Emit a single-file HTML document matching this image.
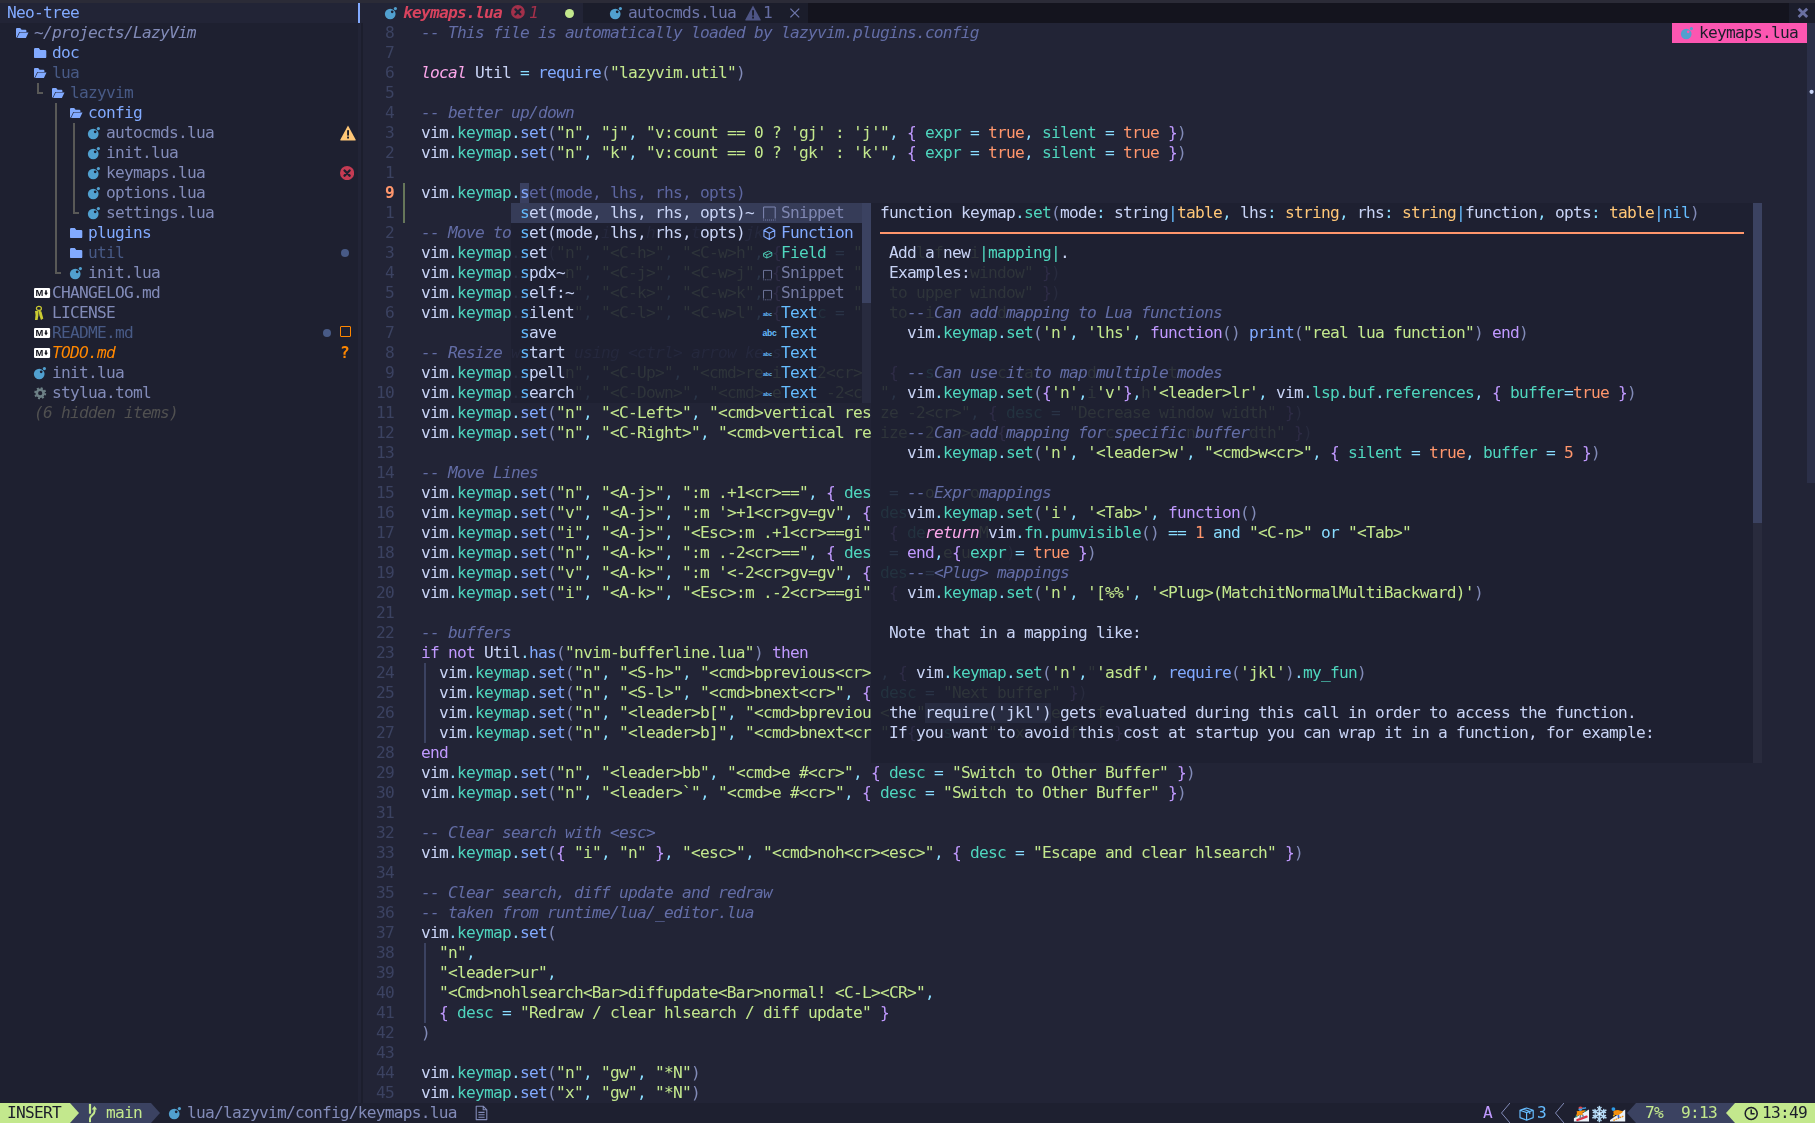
<!DOCTYPE html>
<html lang="en"><head><meta charset="utf-8"><title>keymaps.lua - nvim</title><style>
html,body{margin:0;padding:0}
body{width:1815px;height:1123px;overflow:hidden;background:#222436;position:relative;font-family:"DejaVu Sans Mono","Liberation Mono",monospace;font-size:16.2px;letter-spacing:-0.7532px;line-height:20px;color:#c8d3f5}
.r{position:absolute;display:block}
.row{position:absolute;left:0;width:1815px;height:20px;white-space:pre;will-change:transform}
.row span{position:absolute;top:0.3px;height:20px}
.i{font-style:italic} .b{font-weight:bold} .g{will-change:transform}
</style></head>
<body>
<div class="r" style="left:0px;top:0px;width:1815px;height:3px;background:#2b2b37;"></div>
<div class="r" style="left:0px;top:23px;width:358px;height:1080px;background:#1e2030;"></div>
<div class="r" style="left:361px;top:23px;width:2px;height:1080px;background:#1c1e2d;"></div>
<div class="r" style="left:0px;top:3px;width:358px;height:20px;background:#222436;"></div>
<div class="r" style="left:358px;top:3px;width:2.4px;height:20.4px;background:#82aaff;"></div>
<div class="r" style="left:583px;top:3px;width:225px;height:20px;background:#1b1d2b;"></div>
<div class="r" style="left:808px;top:3px;width:981px;height:20px;background:#14141e;"></div>
<div class="r" style="left:1789px;top:3px;width:26px;height:20px;background:#1b1d2b;"></div>
<div class="r" style="left:1807px;top:23px;width:8px;height:460px;background:#2b2f48;"></div>
<svg class="r" style="left:1807px;top:86px" width="8" height="12" viewBox="0 0 8 12"><circle cx="4.6" cy="5.8" r="2.1" fill="#c8d3f5"/></svg>
<svg class="r" style="left:384px;top:3px" width="16" height="20" viewBox="0 0 16 20"><circle cx="6.2" cy="11" r="5.35" fill="#51a0cf"/><circle cx="8.2" cy="8.8" r="1.35" fill="#222436"/><circle cx="11.4" cy="5.6" r="1.6" fill="#51a0cf"/></svg>
<svg class="r" style="left:511.1px;top:5.0px" width="13.8" height="13.8" viewBox="0 0 13.8 13.8"><circle cx="6.9" cy="6.9" r="6.9" fill="#a3304a"/><path d="M4.416,4.416L9.384,9.384M9.384,4.416L4.416,9.384" stroke="#222436" stroke-width="2.28" stroke-linecap="round"/></svg>
<div class="r" style="left:565.1px;top:9.0px;width:9.0px;height:9.0px;border-radius:50%;background:#c3e88d"></div>
<svg class="r" style="left:609px;top:3px" width="16" height="20" viewBox="0 0 16 20"><circle cx="6.2" cy="11" r="5.35" fill="#51a0cf"/><circle cx="8.2" cy="8.8" r="1.35" fill="#1b1d2b"/><circle cx="11.4" cy="5.6" r="1.6" fill="#51a0cf"/></svg>
<svg class="r" style="left:745px;top:5.2px" width="16" height="16" viewBox="0 0 16 16"><path d="M8,0.6 L15.6,14.4 a0.8,0.8 0 0 1 -0.7,1.1 H1.1 a0.8,0.8 0 0 1 -0.7,-1.1 Z" fill="#4e5585"/><rect x="7.1" y="5.2" width="1.9" height="5.4" fill="#1b1d2b"/><rect x="7.1" y="11.6" width="1.9" height="1.9" fill="#1b1d2b"/></svg>
<svg class="r" style="left:789px;top:3px" width="12" height="20" viewBox="0 0 12 20"><path d="M1.4,5.6l8.8,8.8M10.2,5.6l-8.8,8.8" stroke="#6e76aa" stroke-width="1.3" fill="none"/></svg>
<svg class="r" style="left:1796px;top:3px" width="14" height="20" viewBox="0 0 14 20"><path d="M2.6,5.8l8.6,8.2M11.2,5.8l-8.6,8.2" stroke="#6a70a2" stroke-width="2.9" fill="none"/></svg>
<div class="r" style="left:1672px;top:23px;width:135px;height:20px;background:#fc56b1;"></div>
<svg class="r" style="left:1680px;top:23px" width="16" height="20" viewBox="0 0 16 20"><circle cx="6.2" cy="11" r="5.35" fill="#51a0cf"/><circle cx="8.2" cy="8.8" r="1.35" fill="#fc56b1"/><circle cx="11.4" cy="5.6" r="1.6" fill="#51a0cf"/></svg>
<svg class="r" style="left:16px;top:23px" width="14" height="20" viewBox="0 0 14 20"><path d="M0,14.6 V6.1 a1,1 0 0 1 1,-1 h3.2 l1.4,1.6 h3.8 a1,1 0 0 1 1,1 v1.4 H3.3 L0.7,14.4z M3.8,9.5 H12.5 L9.9,15 H1.1 z" fill="#82aaff"/></svg>
<svg class="r" style="left:34px;top:43px" width="14" height="20" viewBox="0 0 14 20"><path d="M0,6.2 a1.2,1.2 0 0 1 1.2,-1.2 h3.6 l1.5,1.9 h4.8 a1.2,1.2 0 0 1 1.2,1.2 v5.8 a1.2,1.2 0 0 1 -1.2,1.2 h-9.9 a1.2,1.2 0 0 1 -1.2,-1.2 z" fill="#82aaff"/></svg>
<svg class="r" style="left:34px;top:63px" width="14" height="20" viewBox="0 0 14 20"><path d="M0,14.6 V6.1 a1,1 0 0 1 1,-1 h3.2 l1.4,1.6 h3.8 a1,1 0 0 1 1,1 v1.4 H3.3 L0.7,14.4z M3.8,9.5 H12.5 L9.9,15 H1.1 z" fill="#82aaff"/></svg>
<div class="r" style="left:37px;top:83px;width:2px;height:11px;background:#595957;"></div>
<div class="r" style="left:37px;top:92px;width:6px;height:2px;background:#595957;"></div>
<svg class="r" style="left:52px;top:83px" width="14" height="20" viewBox="0 0 14 20"><path d="M0,14.6 V6.1 a1,1 0 0 1 1,-1 h3.2 l1.4,1.6 h3.8 a1,1 0 0 1 1,1 v1.4 H3.3 L0.7,14.4z M3.8,9.5 H12.5 L9.9,15 H1.1 z" fill="#82aaff"/></svg>
<div class="r" style="left:55px;top:103px;width:2px;height:20px;background:#595957;"></div>
<svg class="r" style="left:70px;top:103px" width="14" height="20" viewBox="0 0 14 20"><path d="M0,14.6 V6.1 a1,1 0 0 1 1,-1 h3.2 l1.4,1.6 h3.8 a1,1 0 0 1 1,1 v1.4 H3.3 L0.7,14.4z M3.8,9.5 H12.5 L9.9,15 H1.1 z" fill="#82aaff"/></svg>
<div class="r" style="left:55px;top:123px;width:2px;height:20px;background:#595957;"></div>
<div class="r" style="left:73px;top:123px;width:2px;height:20px;background:#595957;"></div>
<svg class="r" style="left:87px;top:123px" width="16" height="20" viewBox="0 0 16 20"><circle cx="6.2" cy="11" r="5.35" fill="#51a0cf"/><circle cx="8.2" cy="8.8" r="1.35" fill="#1e2030"/><circle cx="11.4" cy="5.6" r="1.6" fill="#51a0cf"/></svg>
<div class="r" style="left:55px;top:143px;width:2px;height:20px;background:#595957;"></div>
<div class="r" style="left:73px;top:143px;width:2px;height:20px;background:#595957;"></div>
<svg class="r" style="left:87px;top:143px" width="16" height="20" viewBox="0 0 16 20"><circle cx="6.2" cy="11" r="5.35" fill="#51a0cf"/><circle cx="8.2" cy="8.8" r="1.35" fill="#1e2030"/><circle cx="11.4" cy="5.6" r="1.6" fill="#51a0cf"/></svg>
<div class="r" style="left:55px;top:163px;width:2px;height:20px;background:#595957;"></div>
<div class="r" style="left:73px;top:163px;width:2px;height:20px;background:#595957;"></div>
<svg class="r" style="left:87px;top:163px" width="16" height="20" viewBox="0 0 16 20"><circle cx="6.2" cy="11" r="5.35" fill="#51a0cf"/><circle cx="8.2" cy="8.8" r="1.35" fill="#1e2030"/><circle cx="11.4" cy="5.6" r="1.6" fill="#51a0cf"/></svg>
<div class="r" style="left:55px;top:183px;width:2px;height:20px;background:#595957;"></div>
<div class="r" style="left:73px;top:183px;width:2px;height:20px;background:#595957;"></div>
<svg class="r" style="left:87px;top:183px" width="16" height="20" viewBox="0 0 16 20"><circle cx="6.2" cy="11" r="5.35" fill="#51a0cf"/><circle cx="8.2" cy="8.8" r="1.35" fill="#1e2030"/><circle cx="11.4" cy="5.6" r="1.6" fill="#51a0cf"/></svg>
<div class="r" style="left:55px;top:203px;width:2px;height:20px;background:#595957;"></div>
<div class="r" style="left:73px;top:203px;width:2px;height:11px;background:#595957;"></div>
<div class="r" style="left:73px;top:212px;width:6px;height:2px;background:#595957;"></div>
<svg class="r" style="left:87px;top:203px" width="16" height="20" viewBox="0 0 16 20"><circle cx="6.2" cy="11" r="5.35" fill="#51a0cf"/><circle cx="8.2" cy="8.8" r="1.35" fill="#1e2030"/><circle cx="11.4" cy="5.6" r="1.6" fill="#51a0cf"/></svg>
<div class="r" style="left:55px;top:223px;width:2px;height:20px;background:#595957;"></div>
<div class="r" style="left:55px;top:243px;width:2px;height:20px;background:#595957;"></div>
<svg class="r" style="left:70px;top:223px" width="14" height="20" viewBox="0 0 14 20"><path d="M0,6.2 a1.2,1.2 0 0 1 1.2,-1.2 h3.6 l1.5,1.9 h4.8 a1.2,1.2 0 0 1 1.2,1.2 v5.8 a1.2,1.2 0 0 1 -1.2,1.2 h-9.9 a1.2,1.2 0 0 1 -1.2,-1.2 z" fill="#82aaff"/></svg>
<svg class="r" style="left:70px;top:243px" width="14" height="20" viewBox="0 0 14 20"><path d="M0,6.2 a1.2,1.2 0 0 1 1.2,-1.2 h3.6 l1.5,1.9 h4.8 a1.2,1.2 0 0 1 1.2,1.2 v5.8 a1.2,1.2 0 0 1 -1.2,1.2 h-9.9 a1.2,1.2 0 0 1 -1.2,-1.2 z" fill="#82aaff"/></svg>
<div class="r" style="left:55px;top:263px;width:2px;height:11px;background:#595957;"></div>
<div class="r" style="left:55px;top:272px;width:6px;height:2px;background:#595957;"></div>
<svg class="r" style="left:69px;top:263px" width="16" height="20" viewBox="0 0 16 20"><circle cx="6.2" cy="11" r="5.35" fill="#51a0cf"/><circle cx="8.2" cy="8.8" r="1.35" fill="#1e2030"/><circle cx="11.4" cy="5.6" r="1.6" fill="#51a0cf"/></svg>
<svg class="r g" style="left:34px;top:283px" width="18" height="20" viewBox="0 0 18 20"><rect x="0" y="5" width="16.1" height="10" rx="1.3" fill="#ffffff"/><text x="1.6" y="12.9" font-family="Liberation Sans, DejaVu Sans, sans-serif" font-weight="bold" font-size="8.2" textLength="7" lengthAdjust="spacingAndGlyphs" fill="#11121c">M</text><path d="M12,7.2v3.6" stroke="#11121c" stroke-width="1.6" fill="none"/><path d="M10.2,9.7h3.7l-1.85,2.9z" fill="#11121c"/></svg>
<svg class="r" style="left:34px;top:303px" width="12" height="20" viewBox="0 0 12 20"><ellipse cx="4.9" cy="5.4" rx="2.5" ry="2" fill="none" stroke="#cbcb32" stroke-width="1.2"/><path d="M1,8 L4.6,7.4 L4.3,13 L3.6,17 L1,17 L1.5,12 Z" fill="#cbcb32"/><path d="M4.6,7.6 L7.4,8.4 L9.3,15.6 L7,17 L5.4,12.6 Z" fill="#cbcb32"/></svg>
<svg class="r g" style="left:34px;top:323px" width="18" height="20" viewBox="0 0 18 20"><rect x="0" y="5" width="16.1" height="10" rx="1.3" fill="#ffffff"/><text x="1.6" y="12.9" font-family="Liberation Sans, DejaVu Sans, sans-serif" font-weight="bold" font-size="8.2" textLength="7" lengthAdjust="spacingAndGlyphs" fill="#11121c">M</text><path d="M12,7.2v3.6" stroke="#11121c" stroke-width="1.6" fill="none"/><path d="M10.2,9.7h3.7l-1.85,2.9z" fill="#11121c"/></svg>
<svg class="r g" style="left:34px;top:343px" width="18" height="20" viewBox="0 0 18 20"><rect x="0" y="5" width="16.1" height="10" rx="1.3" fill="#ffffff"/><text x="1.6" y="12.9" font-family="Liberation Sans, DejaVu Sans, sans-serif" font-weight="bold" font-size="8.2" textLength="7" lengthAdjust="spacingAndGlyphs" fill="#11121c">M</text><path d="M12,7.2v3.6" stroke="#11121c" stroke-width="1.6" fill="none"/><path d="M10.2,9.7h3.7l-1.85,2.9z" fill="#11121c"/></svg>
<svg class="r" style="left:33px;top:363px" width="16" height="20" viewBox="0 0 16 20"><circle cx="6.2" cy="11" r="5.35" fill="#51a0cf"/><circle cx="8.2" cy="8.8" r="1.35" fill="#1e2030"/><circle cx="11.4" cy="5.6" r="1.6" fill="#51a0cf"/></svg>
<svg class="r" style="left:34px;top:383px" width="14" height="20" viewBox="0 0 14 20"><circle cx="6.2" cy="10.2" r="3.4" fill="none" stroke="#6d8086" stroke-width="2.6"/><circle cx="6.2" cy="10.2" r="5.1" fill="none" stroke="#6d8086" stroke-width="1.8" stroke-dasharray="2 2"/></svg>
<svg class="r" style="left:340px;top:125px" width="16" height="16" viewBox="0 0 16 16"><path d="M8,0.6 L15.6,14.4 a0.8,0.8 0 0 1 -0.7,1.1 H1.1 a0.8,0.8 0 0 1 -0.7,-1.1 Z" fill="#ffc777"/><rect x="7.1" y="5.2" width="1.9" height="5.4" fill="#1b1d2b"/><rect x="7.1" y="11.6" width="1.9" height="1.9" fill="#1b1d2b"/></svg>
<svg class="r" style="left:339.9px;top:166.0px" width="14.2" height="14.2" viewBox="0 0 14.2 14.2"><circle cx="7.1" cy="7.1" r="7.1" fill="#c53b53"/><path d="M4.5440000000000005,4.5440000000000005L9.655999999999999,9.655999999999999M9.655999999999999,4.5440000000000005L4.5440000000000005,9.655999999999999" stroke="#1e2030" stroke-width="2.34" stroke-linecap="round"/></svg>
<div class="r" style="left:340.8px;top:248.8px;width:8.4px;height:8.4px;border-radius:50%;background:#485a86"></div>
<div class="r" style="left:323.0px;top:328.8px;width:8.4px;height:8.4px;border-radius:50%;background:#485a86"></div>
<div class="r" style="left:340px;top:326px;width:9.4px;height:9.4px;border:1.5px solid #ff8700;border-radius:1px"></div>
<div class="r" style="left:424px;top:663px;width:2px;height:80px;background:#3b4261;"></div>
<div class="r" style="left:424px;top:943px;width:2px;height:80px;background:#3b4261;"></div>
<div class="r" style="left:403px;top:183px;width:2px;height:40px;background:#66765a;"></div>
<div class="r" style="left:520px;top:183px;width:9px;height:20px;background:#3a4060;"></div>
<div class="r" style="left:511px;top:203px;width:360px;height:200px;background:#1e2031;"></div>
<div class="r" style="left:511px;top:203px;width:351px;height:20px;background:#363c58;"></div>
<div class="r" style="left:862px;top:203px;width:9px;height:200px;background:#282b3f;"></div>
<div class="r" style="left:862px;top:203px;width:9px;height:100px;background:#3b4261;"></div>
<div class="r" style="left:871px;top:203px;width:891px;height:560px;background:#1e2031;"></div>
<div class="r" style="left:1753px;top:203px;width:9px;height:560px;background:#292b3d;"></div>
<div class="r" style="left:1753px;top:203px;width:9px;height:320px;background:#3b4261;"></div>
<div class="r" style="left:880px;top:232px;width:864px;height:2px;background:#ff966c;"></div>
<div class="r" style="left:925px;top:703px;width:126px;height:20px;background:#272b40;"></div>
<svg class="r" style="left:763px;top:203px" width="14" height="20" viewBox="0 0 14 20"><path d="M0.6,15.6V4h11.6v11.6" fill="none" stroke="#7f87b2" stroke-width="1"/><path d="M0.1,17h12.6" stroke="#7f87b2" stroke-width="0.9" stroke-dasharray="1 1"/></svg>
<svg class="r" style="left:763px;top:223px" width="14" height="20" viewBox="0 0 14 20"><path d="M6.3,4.2l5.4,3v6.4l-5.4,3l-5.4,-3v-6.4z M0.9,7.2l5.4,3l5.4,-3 M6.3,10.2v6.4" fill="none" stroke="#82aaff" stroke-width="1.1" stroke-linejoin="round"/></svg>
<svg class="r" style="left:763px;top:243px" width="10" height="20" viewBox="0 0 10 20"><path d="M5.4,8.2l3.4,1.4v3.2l-5,2.2l-3.2,-1.6v-3z M0.6,10.4l3.2,1.5l5,-2.3 M3.8,11.9v3.1" fill="none" stroke="#4fd6be" stroke-width="0.9" stroke-linejoin="round"/></svg>
<svg class="r" style="left:763px;top:263px" width="10" height="20" viewBox="0 0 10 20"><path d="M0.5,15.6V7.4h8v8.2" fill="none" stroke="#737aa2" stroke-width="0.9"/><path d="M0.1,16.8h9" stroke="#737aa2" stroke-width="0.8" stroke-dasharray="1 0.8"/></svg>
<svg class="r" style="left:763px;top:283px" width="10" height="20" viewBox="0 0 10 20"><path d="M0.5,15.6V7.4h8v8.2" fill="none" stroke="#737aa2" stroke-width="0.9"/><path d="M0.1,16.8h9" stroke="#737aa2" stroke-width="0.8" stroke-dasharray="1 0.8"/></svg>
<span class="r" style="left:763px;top:309.5px;font:bold 5.4px/8px 'Liberation Sans','DejaVu Sans',sans-serif;color:#65bcff;letter-spacing:-0.2px">abc</span>
<span class="r" style="left:762.5px;top:327.5px;font:bold 8.6px/10px 'Liberation Sans','DejaVu Sans',sans-serif;color:#65bcff;letter-spacing:-0.3px">abc</span>
<span class="r" style="left:763px;top:349.5px;font:bold 5.4px/8px 'Liberation Sans','DejaVu Sans',sans-serif;color:#65bcff;letter-spacing:-0.2px">abc</span>
<span class="r" style="left:763px;top:369.5px;font:bold 5.4px/8px 'Liberation Sans','DejaVu Sans',sans-serif;color:#65bcff;letter-spacing:-0.2px">abc</span>
<span class="r" style="left:763px;top:389.5px;font:bold 5.4px/8px 'Liberation Sans','DejaVu Sans',sans-serif;color:#65bcff;letter-spacing:-0.2px">abc</span>
<div class="r" style="left:0px;top:1103px;width:1815px;height:20px;background:#1e2030;"></div>
<div class="r" style="left:0px;top:1103px;width:70px;height:20px;background:#c3e88d;"></div>
<div class="r" style="left:70px;top:1103px;width:81px;height:20px;background:#3b4261;"></div>
<svg class="r" style="left:70px;top:1103px" width="9" height="20" viewBox="0 0 9 20"><path d="M0,0L9,10L0,20z" fill="#c3e88d"/></svg>
<svg class="r" style="left:151px;top:1103px" width="9" height="20" viewBox="0 0 9 20"><path d="M0,0L9,10L0,20z" fill="#3b4261"/></svg>
<svg class="r" style="left:88px;top:1103px" width="10" height="20" viewBox="0 0 10 20"><path d="M2,0.9v9.8" stroke="#c3e88d" stroke-width="2.2" fill="none"/><path d="M2,19.2v-3.6c0,-3.6 4.5,-3.4 4.5,-7v-3" stroke="#c3e88d" stroke-width="2" fill="none"/><path d="M3.7,6.4L6.5,3L9.1,6.4z" fill="#c3e88d"/></svg>
<svg class="r" style="left:168px;top:1103px" width="16" height="20" viewBox="0 0 16 20"><circle cx="6.2" cy="11" r="5.35" fill="#51a0cf"/><circle cx="8.2" cy="8.8" r="1.35" fill="#1e2030"/><circle cx="11.4" cy="5.6" r="1.6" fill="#51a0cf"/></svg>
<svg class="r" style="left:475px;top:1103px" width="14" height="20" viewBox="0 0 14 20"><path d="M1.2,3.2h7l3.6,3.6v9.8h-10.6z M8.2,3.2v3.6h3.6 M3.4,9.4h6.2 M3.4,11.8h6.2 M3.4,14.2h6.2" fill="none" stroke="#828bb8" stroke-width="1.1" stroke-linejoin="round"/></svg>
<svg class="r" style="left:1501px;top:1103px" width="9" height="20" viewBox="0 0 9 20"><path d="M9,0L0.5,10L9,20" fill="none" stroke="#828bb8" stroke-width="1"/></svg>
<svg class="r" style="left:1555px;top:1103px" width="9" height="20" viewBox="0 0 9 20"><path d="M9,0L0.5,10L9,20" fill="none" stroke="#828bb8" stroke-width="1"/></svg>
<svg class="r" style="left:1519px;top:1103px" width="16" height="20" viewBox="0 0 16 20"><path d="M1,7.2l6.6,-2.2l6.6,2.2v7.4l-6.6,2.6l-6.6,-2.6z M1,7.2l6.6,2.4l6.6,-2.4 M7.6,9.6v7.6 M4.2,6.1l6.6,2.4v2.6" fill="none" stroke="#65bcff" stroke-width="1.2" stroke-linejoin="round"/></svg>
<div class="r" style="left:1636px;top:1103px;width:99px;height:20px;background:#3b4261;"></div>
<svg class="r" style="left:1627px;top:1103px" width="9" height="20" viewBox="0 0 9 20"><path d="M9,0L0,10L9,20z" fill="#3b4261"/></svg>
<div class="r" style="left:1735px;top:1103px;width:80px;height:20px;background:#c3e88d;"></div>
<svg class="r" style="left:1726px;top:1103px" width="9" height="20" viewBox="0 0 9 20"><path d="M9,0L0,10L9,20z" fill="#c3e88d"/></svg>
<svg class="r" style="left:1744px;top:1103px" width="16" height="20" viewBox="0 0 16 20"><circle cx="7.2" cy="10.4" r="6" fill="none" stroke="#1b1d2b" stroke-width="1.5"/><path d="M7.2,6.6v4.2h3.4" fill="none" stroke="#1b1d2b" stroke-width="1.5"/></svg>
<svg class="r" style="left:1573px;top:1103px" width="17" height="20" viewBox="0 0 17 20"><path d="M0.9,15.3L16,6.5V18.6H0.9z" fill="#eaf1f8"/><path d="M4.4,17L13.6,13.6" stroke="#dd2e44" stroke-width="2.3" stroke-linecap="round"/><path d="M7.6,11.4L7.1,15.6M9.4,11.4L10.6,14.6" stroke="#77838f" stroke-width="1.5"/><path d="M3.6,8.2L11.6,7.2L12.6,8.2L9.6,9.6V12H5.6L4.4,13.6L3,13L4,10z" fill="#f4900c"/><circle cx="3.4" cy="13.4" r="0.9" fill="#1fa68a"/><circle cx="12.6" cy="8" r="0.8" fill="#1fa68a"/><path d="M8.6,5.6C10.4,5.2 11.6,5.4 13,4.6" stroke="#3b9fe6" stroke-width="1.5" fill="none"/><circle cx="7.3" cy="6.3" r="1.7" fill="#4aa6e8"/><path d="M5.3,5.6a2.2,2.2 0 0 1 4.4,0z" fill="#e2474a"/></svg>
<svg class="r" style="left:1592px;top:1103px" width="16" height="22" viewBox="0 0 16 22"><g stroke="#b5daf6" fill="none" stroke-linecap="round"><path d="M7.4,3.6v14.8M1,7.3l12.8,7.4M13.8,7.3l-12.8,7.4" stroke-width="1.7"/><path d="M7.4,6.2l4.2,2.4v4.8l-4.2,2.4l-4.2,-2.4v-4.8z" stroke-width="1.3"/><path d="M5.6,4.4l1.8,1.7l1.8,-1.7M5.6,17.6l1.8,-1.7l1.8,1.7M1.2,9.6l2.4,-0.7l-0.6,-2.4M13.6,9.6l-2.4,-0.7l0.6,-2.4M1.2,12.4l2.4,0.7l-0.6,2.4M13.6,12.4l-2.4,0.7l0.6,2.4" stroke-width="1.3"/></g><circle cx="7.4" cy="11" r="0.9" fill="#e8f4fd"/></svg>
<svg class="r" style="left:1610px;top:1103px" width="17" height="20" viewBox="0 0 17 20"><path d="M0,17L15.2,6.5V18.6H0z" fill="#eaf1f8"/><path d="M3.4,17.4L13.8,13" stroke="#f4900c" stroke-width="1.3" stroke-dasharray="1.6 0.7"/><path d="M8.2,11.4L8.8,15" stroke="#3a67c8" stroke-width="1.7"/><path d="M3.6,7.6L8,7L12.8,8.2L12.4,9.4L8.6,12H4.4L3.4,10z" fill="#f4900c"/><circle cx="3.9" cy="12.5" r="1" fill="#f4b40c"/><circle cx="3.4" cy="6.1" r="1.9" fill="#2e9be6"/></svg>
<div class="row" style="top:3px"><span style="left:7px;color:#82aaff">Neo-tree</span><span class="i b" style="left:403px;color:#d8435e">keymaps.lua</span><span class="i " style="left:529px;color:#a3304a">1</span><span style="left:628px;color:#6e76aa">autocmds.lua</span><span style="left:763px;color:#656da2">1</span></div>
<div class="row" style="top:23px"><span style="left:1699px;color:#1b1d2b">keymaps.lua</span><span class="i " style="left:34px;color:#828bb8">~/projects/LazyVim</span><span style="left:385px;color:#3b4261">8</span><span class="i " style="left:421px;color:#636da6">--</span><span class="i " style="left:448px;color:#636da6">This</span><span class="i " style="left:493px;color:#636da6">file</span><span class="i " style="left:538px;color:#636da6">is</span><span class="i " style="left:565px;color:#636da6">automatically</span><span class="i " style="left:691px;color:#636da6">loaded</span><span class="i " style="left:754px;color:#636da6">by</span><span class="i " style="left:781px;color:#636da6">lazyvim.plugins.config</span></div>
<div class="row" style="top:43px"><span style="left:52px;color:#82aaff">doc</span><span style="left:385px;color:#3b4261">7</span></div>
<div class="row" style="top:63px"><span style="left:52px;color:#485a86">lua</span><span style="left:385px;color:#3b4261">6</span><span class="i " style="left:421px;color:#fca7ea">local</span><span style="left:475px;color:#c8d3f5">Util</span><span style="left:520px;color:#89ddff">=</span><span style="left:538px;color:#82aaff">require</span><span style="left:601px;color:#828bb8">(</span><span style="left:610px;color:#c3e88d">"lazyvim.util"</span><span style="left:736px;color:#828bb8">)</span></div>
<div class="row" style="top:83px"><span style="left:70px;color:#485a86">lazyvim</span><span style="left:385px;color:#3b4261">5</span></div>
<div class="row" style="top:103px"><span style="left:88px;color:#82aaff">config</span><span style="left:385px;color:#3b4261">4</span><span class="i " style="left:421px;color:#636da6">--</span><span class="i " style="left:448px;color:#636da6">better</span><span class="i " style="left:511px;color:#636da6">up/down</span></div>
<div class="row" style="top:123px"><span style="left:106px;color:#828bb8">autocmds.lua</span><span style="left:385px;color:#3b4261">3</span><span style="left:421px;color:#c8d3f5">vim</span><span style="left:448px;color:#89ddff">.</span><span style="left:457px;color:#4fd6be">keymap</span><span style="left:511px;color:#89ddff">.</span><span style="left:520px;color:#82aaff">set</span><span style="left:547px;color:#828bb8">(</span><span style="left:556px;color:#c3e88d">"n"</span><span style="left:583px;color:#89ddff">,</span><span style="left:601px;color:#c3e88d">"j"</span><span style="left:628px;color:#89ddff">,</span><span style="left:646px;color:#c3e88d">"v:count</span><span style="left:727px;color:#c3e88d">==</span><span style="left:754px;color:#c3e88d">0</span><span style="left:772px;color:#c3e88d">?</span><span style="left:790px;color:#c3e88d">'gj'</span><span style="left:835px;color:#c3e88d">:</span><span style="left:853px;color:#c3e88d">'j'"</span><span style="left:889px;color:#89ddff">,</span><span style="left:907px;color:#c099ff">{</span><span style="left:925px;color:#4fd6be">expr</span><span style="left:970px;color:#89ddff">=</span><span style="left:988px;color:#ff966c">true</span><span style="left:1024px;color:#89ddff">,</span><span style="left:1042px;color:#4fd6be">silent</span><span style="left:1105px;color:#89ddff">=</span><span style="left:1123px;color:#ff966c">true</span><span style="left:1168px;color:#c099ff">}</span><span style="left:1177px;color:#828bb8">)</span></div>
<div class="row" style="top:143px"><span style="left:106px;color:#828bb8">init.lua</span><span style="left:385px;color:#3b4261">2</span><span style="left:421px;color:#c8d3f5">vim</span><span style="left:448px;color:#89ddff">.</span><span style="left:457px;color:#4fd6be">keymap</span><span style="left:511px;color:#89ddff">.</span><span style="left:520px;color:#82aaff">set</span><span style="left:547px;color:#828bb8">(</span><span style="left:556px;color:#c3e88d">"n"</span><span style="left:583px;color:#89ddff">,</span><span style="left:601px;color:#c3e88d">"k"</span><span style="left:628px;color:#89ddff">,</span><span style="left:646px;color:#c3e88d">"v:count</span><span style="left:727px;color:#c3e88d">==</span><span style="left:754px;color:#c3e88d">0</span><span style="left:772px;color:#c3e88d">?</span><span style="left:790px;color:#c3e88d">'gk'</span><span style="left:835px;color:#c3e88d">:</span><span style="left:853px;color:#c3e88d">'k'"</span><span style="left:889px;color:#89ddff">,</span><span style="left:907px;color:#c099ff">{</span><span style="left:925px;color:#4fd6be">expr</span><span style="left:970px;color:#89ddff">=</span><span style="left:988px;color:#ff966c">true</span><span style="left:1024px;color:#89ddff">,</span><span style="left:1042px;color:#4fd6be">silent</span><span style="left:1105px;color:#89ddff">=</span><span style="left:1123px;color:#ff966c">true</span><span style="left:1168px;color:#c099ff">}</span><span style="left:1177px;color:#828bb8">)</span></div>
<div class="row" style="top:163px"><span style="left:106px;color:#828bb8">keymaps.lua</span><span style="left:385px;color:#3b4261">1</span></div>
<div class="row" style="top:183px"><span style="left:106px;color:#828bb8">options.lua</span><span class="b" style="left:385px;color:#ff966c">9</span><span style="left:421px;color:#c8d3f5">vim</span><span style="left:448px;color:#89ddff">.</span><span style="left:457px;color:#4fd6be">keymap</span><span style="left:511px;color:#89ddff">.</span><span style="left:520px;color:#82aaff">s</span><span style="left:529px;color:#5d66a0">et(mode,</span><span style="left:610px;color:#5d66a0">lhs,</span><span style="left:655px;color:#5d66a0">rhs,</span><span style="left:700px;color:#5d66a0">opts)</span></div>
<div class="row" style="top:203px"><span style="left:106px;color:#828bb8">settings.lua</span><span style="left:385px;color:#3b4261">1</span><span style="left:520px;color:#65bcff">s</span><span style="left:529px;color:#c8d3f5">et(mode,</span><span style="left:610px;color:#c8d3f5">lhs,</span><span style="left:655px;color:#c8d3f5">rhs,</span><span style="left:700px;color:#c8d3f5">opts)~</span><span style="left:781px;color:#7f87b2">Snippet</span><span style="left:880px;color:#c8d3f5">function</span><span style="left:961px;color:#c8d3f5">keymap</span><span style="left:1015px;color:#89ddff">.</span><span style="left:1024px;color:#4fd6be">set</span><span style="left:1051px;color:#828bb8">(</span><span style="left:1060px;color:#c8d3f5">mode</span><span style="left:1096px;color:#89ddff">:</span><span style="left:1114px;color:#c8d3f5">string</span><span style="left:1168px;color:#65bcff">|</span><span style="left:1177px;color:#ffc777">table</span><span style="left:1222px;color:#89ddff">,</span><span style="left:1240px;color:#c8d3f5">lhs</span><span style="left:1267px;color:#89ddff">:</span><span style="left:1285px;color:#ffc777">string</span><span style="left:1339px;color:#89ddff">,</span><span style="left:1357px;color:#c8d3f5">rhs</span><span style="left:1384px;color:#89ddff">:</span><span style="left:1402px;color:#ffc777">string</span><span style="left:1456px;color:#65bcff">|</span><span style="left:1465px;color:#c8d3f5">function</span><span style="left:1537px;color:#89ddff">,</span><span style="left:1555px;color:#c8d3f5">opts</span><span style="left:1591px;color:#89ddff">:</span><span style="left:1609px;color:#ffc777">table</span><span style="left:1654px;color:#65bcff">|nil</span><span style="left:1690px;color:#828bb8">)</span></div>
<div class="row" style="top:223px"><span style="left:88px;color:#82aaff">plugins</span><span style="left:385px;color:#3b4261">2</span><span class="i " style="left:421px;color:#636da6">--</span><span class="i " style="left:448px;color:#636da6">Move</span><span class="i " style="left:493px;color:#636da6">to</span><span class="i " style="left:601px;color:#25283d">i</span><span class="i " style="left:646px;color:#25283d">h</span><span class="i " style="left:691px;color:#25283d">t</span><span class="i " style="left:745px;color:#25283d">jk</span><span style="left:520px;color:#65bcff">s</span><span style="left:529px;color:#c8d3f5">et(mode,</span><span style="left:610px;color:#c8d3f5">lhs,</span><span style="left:655px;color:#c8d3f5">rhs,</span><span style="left:700px;color:#c8d3f5">opts)</span><span style="left:781px;color:#82aaff">Function</span></div>
<div class="row" style="top:243px"><span style="left:88px;color:#485a86">util</span><span style="left:385px;color:#3b4261">3</span><span style="left:421px;color:#c8d3f5">vim</span><span style="left:448px;color:#89ddff">.</span><span style="left:457px;color:#4fd6be">keymap</span><span style="left:511px;color:#293346">.</span><span style="left:547px;color:#282b3e">(</span><span style="left:556px;color:#2e343a">"n"</span><span style="left:583px;color:#293346">,</span><span style="left:601px;color:#2e343a">"&lt;C-h&gt;"</span><span style="left:664px;color:#293346">,</span><span style="left:682px;color:#2e343a">"&lt;C-w&gt;h"</span><span style="left:754px;color:#293346">,</span><span style="left:772px;color:#2e2c46">{</span><span style="left:835px;color:#293346">=</span><span style="left:853px;color:#2e343a">"</span><span style="left:916px;color:#2e343a">l</span><span style="left:934px;color:#2e343a">f</span><span style="left:970px;color:#2e343a">i</span><span style="left:520px;color:#65bcff">s</span><span style="left:529px;color:#c8d3f5">et</span><span style="left:781px;color:#4fd6be">Field</span><span style="left:889px;color:#c8d3f5">Add</span><span style="left:925px;color:#c8d3f5">a</span><span style="left:943px;color:#c8d3f5">new</span><span style="left:979px;color:#4fd6be">|mapping|</span><span style="left:1060px;color:#c8d3f5">.</span></div>
<div class="row" style="top:263px"><span style="left:88px;color:#828bb8">init.lua</span><span style="left:385px;color:#3b4261">4</span><span style="left:421px;color:#c8d3f5">vim</span><span style="left:448px;color:#89ddff">.</span><span style="left:457px;color:#4fd6be">keymap</span><span style="left:511px;color:#293346">.</span><span style="left:565px;color:#2e343a">n"</span><span style="left:583px;color:#293346">,</span><span style="left:601px;color:#2e343a">"&lt;C-j&gt;"</span><span style="left:664px;color:#293346">,</span><span style="left:682px;color:#2e343a">"&lt;C-w&gt;j"</span><span style="left:754px;color:#293346">,</span><span style="left:772px;color:#2e2c46">{</span><span style="left:853px;color:#2e343a">"</span><span style="left:970px;color:#2e343a">window"</span><span style="left:1042px;color:#2e2c46">}</span><span style="left:1051px;color:#282b3e">)</span><span style="left:520px;color:#65bcff">s</span><span style="left:529px;color:#c8d3f5">pdx~</span><span style="left:781px;color:#737aa2">Snippet</span><span style="left:889px;color:#c8d3f5">Examples:</span></div>
<div class="row" style="top:283px"><span style="left:52px;color:#828bb8">CHANGELOG.md</span><span style="left:385px;color:#3b4261">5</span><span style="left:421px;color:#c8d3f5">vim</span><span style="left:448px;color:#89ddff">.</span><span style="left:457px;color:#4fd6be">keymap</span><span style="left:511px;color:#293346">.</span><span style="left:574px;color:#2e343a">"</span><span style="left:583px;color:#293346">,</span><span style="left:601px;color:#2e343a">"&lt;C-k&gt;"</span><span style="left:664px;color:#293346">,</span><span style="left:682px;color:#2e343a">"&lt;C-w&gt;k"</span><span style="left:754px;color:#293346">,</span><span style="left:772px;color:#2e2c46">{</span><span style="left:853px;color:#2e343a">"</span><span style="left:889px;color:#2e343a">to</span><span style="left:916px;color:#2e343a">upper</span><span style="left:970px;color:#2e343a">window"</span><span style="left:1042px;color:#2e2c46">}</span><span style="left:1051px;color:#282b3e">)</span><span style="left:520px;color:#65bcff">s</span><span style="left:529px;color:#c8d3f5">elf:~</span><span style="left:781px;color:#737aa2">Snippet</span></div>
<div class="row" style="top:303px"><span style="left:52px;color:#828bb8">LICENSE</span><span style="left:385px;color:#3b4261">6</span><span style="left:421px;color:#c8d3f5">vim</span><span style="left:448px;color:#89ddff">.</span><span style="left:457px;color:#4fd6be">keymap</span><span style="left:511px;color:#293346">.</span><span style="left:574px;color:#2e343a">"</span><span style="left:583px;color:#293346">,</span><span style="left:601px;color:#2e343a">"&lt;C-l&gt;"</span><span style="left:664px;color:#293346">,</span><span style="left:682px;color:#2e343a">"&lt;C-w&gt;l"</span><span style="left:754px;color:#293346">,</span><span style="left:772px;color:#2e2c46">{</span><span style="left:817px;color:#23323f">c</span><span style="left:835px;color:#293346">=</span><span style="left:853px;color:#2e343a">"</span><span style="left:889px;color:#2e343a">to</span><span style="left:925px;color:#2e343a">i</span><span style="left:997px;color:#2e343a">d</span><span style="left:520px;color:#65bcff">s</span><span style="left:529px;color:#c8d3f5">ilent</span><span style="left:781px;color:#65bcff">Text</span><span class="i " style="left:907px;color:#636da6">--</span><span class="i " style="left:934px;color:#636da6">Can</span><span class="i " style="left:970px;color:#636da6">add</span><span class="i " style="left:1006px;color:#636da6">mapping</span><span class="i " style="left:1078px;color:#636da6">to</span><span class="i " style="left:1105px;color:#636da6">Lua</span><span class="i " style="left:1141px;color:#636da6">functions</span></div>
<div class="row" style="top:323px"><span style="left:52px;color:#485a86">README.md</span><span style="left:385px;color:#3b4261">7</span><span style="left:520px;color:#65bcff">s</span><span style="left:529px;color:#c8d3f5">ave</span><span style="left:781px;color:#65bcff">Text</span><span style="left:907px;color:#c8d3f5">vim</span><span style="left:934px;color:#89ddff">.</span><span style="left:943px;color:#4fd6be">keymap</span><span style="left:997px;color:#89ddff">.</span><span style="left:1006px;color:#4fd6be">set</span><span style="left:1033px;color:#828bb8">(</span><span style="left:1042px;color:#c3e88d">'n'</span><span style="left:1069px;color:#89ddff">,</span><span style="left:1087px;color:#c3e88d">'lhs'</span><span style="left:1132px;color:#89ddff">,</span><span style="left:1150px;color:#c099ff">function</span><span style="left:1222px;color:#828bb8">()</span><span style="left:1249px;color:#82aaff">print</span><span style="left:1294px;color:#828bb8">(</span><span style="left:1303px;color:#c3e88d">"real</span><span style="left:1357px;color:#c3e88d">lua</span><span style="left:1393px;color:#c3e88d">function"</span><span style="left:1474px;color:#828bb8">)</span><span style="left:1492px;color:#c099ff">end</span><span style="left:1519px;color:#828bb8">)</span></div>
<div class="row" style="top:343px"><span class="i " style="left:52px;color:#ff8700">TODO.md</span><span class="b" style="left:340px;color:#ff8700">?</span><span style="left:385px;color:#3b4261">8</span><span class="i " style="left:421px;color:#636da6">--</span><span class="i " style="left:448px;color:#636da6">Resize</span><span class="i " style="left:511px;color:#25283d">w</span><span class="i " style="left:574px;color:#25283d">using</span><span class="i " style="left:628px;color:#25283d">&lt;ctrl&gt;</span><span class="i " style="left:691px;color:#25283d">arrow</span><span class="i " style="left:745px;color:#25283d">ke</span><span class="i " style="left:772px;color:#25283d">s</span><span style="left:520px;color:#65bcff">s</span><span style="left:529px;color:#c8d3f5">tart</span><span style="left:781px;color:#65bcff">Text</span></div>
<div class="row" style="top:363px"><span style="left:52px;color:#828bb8">init.lua</span><span style="left:385px;color:#3b4261">9</span><span style="left:421px;color:#c8d3f5">vim</span><span style="left:448px;color:#89ddff">.</span><span style="left:457px;color:#4fd6be">keymap</span><span style="left:511px;color:#293346">.</span><span style="left:565px;color:#2e343a">n"</span><span style="left:583px;color:#293346">,</span><span style="left:601px;color:#2e343a">"&lt;C-Up&gt;"</span><span style="left:673px;color:#293346">,</span><span style="left:691px;color:#2e343a">"&lt;cmd&gt;re</span><span style="left:772px;color:#2e343a">i</span><span style="left:817px;color:#2e343a">2&lt;cr&gt;</span><span style="left:889px;color:#2e2c46">{</span><span style="left:925px;color:#23323f">s</span><span style="left:997px;color:#2e343a">c</span><span style="left:1024px;color:#2e343a">a</span><span style="left:1087px;color:#2e343a">d</span><span style="left:1168px;color:#2e343a">t</span><span style="left:520px;color:#65bcff">s</span><span style="left:529px;color:#c8d3f5">pell</span><span style="left:781px;color:#65bcff">Text</span><span class="i " style="left:907px;color:#636da6">--</span><span class="i " style="left:934px;color:#636da6">Can</span><span class="i " style="left:970px;color:#636da6">use</span><span class="i " style="left:1006px;color:#636da6">it</span><span class="i " style="left:1033px;color:#636da6">to</span><span class="i " style="left:1060px;color:#636da6">map</span><span class="i " style="left:1096px;color:#636da6">multiple</span><span class="i " style="left:1177px;color:#636da6">modes</span></div>
<div class="row" style="top:383px"><span style="left:52px;color:#828bb8">stylua.toml</span><span style="left:376px;color:#3b4261">10</span><span style="left:421px;color:#c8d3f5">vim</span><span style="left:448px;color:#89ddff">.</span><span style="left:457px;color:#4fd6be">keymap</span><span style="left:511px;color:#293346">.</span><span style="left:574px;color:#2e343a">"</span><span style="left:583px;color:#293346">,</span><span style="left:601px;color:#2e343a">"&lt;C-Down&gt;"</span><span style="left:691px;color:#293346">,</span><span style="left:709px;color:#2e343a">"&lt;cmd&gt;</span><span style="left:772px;color:#2e343a">e</span><span style="left:826px;color:#2e343a">-2&lt;c</span><span style="left:880px;color:#2e343a">"</span><span style="left:889px;color:#293346">,</span><span style="left:1087px;color:#2e343a">i</span><span style="left:1141px;color:#2e343a">h</span><span style="left:520px;color:#65bcff">s</span><span style="left:529px;color:#c8d3f5">earch</span><span style="left:781px;color:#65bcff">Text</span><span style="left:907px;color:#c8d3f5">vim</span><span style="left:934px;color:#89ddff">.</span><span style="left:943px;color:#4fd6be">keymap</span><span style="left:997px;color:#89ddff">.</span><span style="left:1006px;color:#4fd6be">set</span><span style="left:1033px;color:#828bb8">(</span><span style="left:1042px;color:#c099ff">{</span><span style="left:1051px;color:#c3e88d">'n'</span><span style="left:1078px;color:#89ddff">,</span><span style="left:1096px;color:#c3e88d">'v'</span><span style="left:1123px;color:#c099ff">}</span><span style="left:1132px;color:#89ddff">,</span><span style="left:1150px;color:#c3e88d">'&lt;leader&gt;lr'</span><span style="left:1258px;color:#89ddff">,</span><span style="left:1276px;color:#c8d3f5">vim</span><span style="left:1303px;color:#89ddff">.</span><span style="left:1312px;color:#4fd6be">lsp</span><span style="left:1339px;color:#89ddff">.</span><span style="left:1348px;color:#4fd6be">buf</span><span style="left:1375px;color:#89ddff">.</span><span style="left:1384px;color:#4fd6be">references</span><span style="left:1474px;color:#89ddff">,</span><span style="left:1492px;color:#c099ff">{</span><span style="left:1510px;color:#4fd6be">buffer</span><span style="left:1564px;color:#89ddff">=</span><span style="left:1573px;color:#ff966c">true</span><span style="left:1618px;color:#c099ff">}</span><span style="left:1627px;color:#828bb8">)</span></div>
<div class="row" style="top:403px"><span class="i " style="left:34px;color:#505050">(6 hidden items)</span><span style="left:376px;color:#3b4261">11</span><span style="left:421px;color:#c8d3f5">vim</span><span style="left:448px;color:#89ddff">.</span><span style="left:457px;color:#4fd6be">keymap</span><span style="left:511px;color:#89ddff">.</span><span style="left:520px;color:#82aaff">set</span><span style="left:547px;color:#828bb8">(</span><span style="left:556px;color:#c3e88d">"n"</span><span style="left:583px;color:#89ddff">,</span><span style="left:601px;color:#c3e88d">"&lt;C-Left&gt;"</span><span style="left:691px;color:#89ddff">,</span><span style="left:709px;color:#c3e88d">"&lt;cmd&gt;vertical</span><span style="left:844px;color:#c3e88d">res</span><span style="left:880px;color:#2e343a">ze</span><span style="left:907px;color:#2e343a">-2&lt;cr&gt;"</span><span style="left:970px;color:#293346">,</span><span style="left:988px;color:#2e2c46">{</span><span style="left:1006px;color:#23323f">desc</span><span style="left:1051px;color:#293346">=</span><span style="left:1069px;color:#2e343a">"Decrease</span><span style="left:1159px;color:#2e343a">window</span><span style="left:1222px;color:#2e343a">width"</span><span style="left:1285px;color:#2e2c46">}</span><span style="left:1294px;color:#282b3e">)</span></div>
<div class="row" style="top:423px"><span style="left:376px;color:#3b4261">12</span><span style="left:421px;color:#c8d3f5">vim</span><span style="left:448px;color:#89ddff">.</span><span style="left:457px;color:#4fd6be">keymap</span><span style="left:511px;color:#89ddff">.</span><span style="left:520px;color:#82aaff">set</span><span style="left:547px;color:#828bb8">(</span><span style="left:556px;color:#c3e88d">"n"</span><span style="left:583px;color:#89ddff">,</span><span style="left:601px;color:#c3e88d">"&lt;C-Right&gt;"</span><span style="left:700px;color:#89ddff">,</span><span style="left:718px;color:#c3e88d">"&lt;cmd&gt;vertical</span><span style="left:853px;color:#c3e88d">re</span><span style="left:880px;color:#2e343a">ize</span><span style="left:925px;color:#2e343a">2</span><span style="left:961px;color:#2e343a">&gt;</span><span style="left:997px;color:#2e2c46">{</span><span style="left:1105px;color:#2e343a">c</span><span style="left:1186px;color:#2e343a">n</span><span style="left:1249px;color:#2e343a">dth"</span><span style="left:1294px;color:#2e2c46">}</span><span style="left:1303px;color:#282b3e">)</span><span class="i " style="left:907px;color:#636da6">--</span><span class="i " style="left:934px;color:#636da6">Can</span><span class="i " style="left:970px;color:#636da6">add</span><span class="i " style="left:1006px;color:#636da6">mapping</span><span class="i " style="left:1078px;color:#636da6">for</span><span class="i " style="left:1114px;color:#636da6">specific</span><span class="i " style="left:1195px;color:#636da6">buffer</span></div>
<div class="row" style="top:443px"><span style="left:376px;color:#3b4261">13</span><span style="left:907px;color:#c8d3f5">vim</span><span style="left:934px;color:#89ddff">.</span><span style="left:943px;color:#4fd6be">keymap</span><span style="left:997px;color:#89ddff">.</span><span style="left:1006px;color:#4fd6be">set</span><span style="left:1033px;color:#828bb8">(</span><span style="left:1042px;color:#c3e88d">'n'</span><span style="left:1069px;color:#89ddff">,</span><span style="left:1087px;color:#c3e88d">'&lt;leader&gt;w'</span><span style="left:1186px;color:#89ddff">,</span><span style="left:1204px;color:#c3e88d">"&lt;cmd&gt;w&lt;cr&gt;"</span><span style="left:1312px;color:#89ddff">,</span><span style="left:1330px;color:#c099ff">{</span><span style="left:1348px;color:#4fd6be">silent</span><span style="left:1411px;color:#89ddff">=</span><span style="left:1429px;color:#ff966c">true</span><span style="left:1465px;color:#89ddff">,</span><span style="left:1483px;color:#4fd6be">buffer</span><span style="left:1546px;color:#89ddff">=</span><span style="left:1564px;color:#ff966c">5</span><span style="left:1582px;color:#c099ff">}</span><span style="left:1591px;color:#828bb8">)</span></div>
<div class="row" style="top:463px"><span style="left:376px;color:#3b4261">14</span><span class="i " style="left:421px;color:#636da6">--</span><span class="i " style="left:448px;color:#636da6">Move</span><span class="i " style="left:493px;color:#636da6">Lines</span></div>
<div class="row" style="top:483px"><span style="left:376px;color:#3b4261">15</span><span style="left:421px;color:#c8d3f5">vim</span><span style="left:448px;color:#89ddff">.</span><span style="left:457px;color:#4fd6be">keymap</span><span style="left:511px;color:#89ddff">.</span><span style="left:520px;color:#82aaff">set</span><span style="left:547px;color:#828bb8">(</span><span style="left:556px;color:#c3e88d">"n"</span><span style="left:583px;color:#89ddff">,</span><span style="left:601px;color:#c3e88d">"&lt;A-j&gt;"</span><span style="left:664px;color:#89ddff">,</span><span style="left:682px;color:#c3e88d">":m</span><span style="left:718px;color:#c3e88d">.+1&lt;cr&gt;=="</span><span style="left:808px;color:#89ddff">,</span><span style="left:826px;color:#c099ff">{</span><span style="left:844px;color:#4fd6be">des</span><span style="left:889px;color:#293346">=</span><span style="left:925px;color:#2e343a">o</span><span style="left:970px;color:#2e343a">o</span><span class="i " style="left:907px;color:#636da6">--</span><span class="i " style="left:934px;color:#636da6">Expr</span><span class="i " style="left:979px;color:#636da6">mappings</span></div>
<div class="row" style="top:503px"><span style="left:376px;color:#3b4261">16</span><span style="left:421px;color:#c8d3f5">vim</span><span style="left:448px;color:#89ddff">.</span><span style="left:457px;color:#4fd6be">keymap</span><span style="left:511px;color:#89ddff">.</span><span style="left:520px;color:#82aaff">set</span><span style="left:547px;color:#828bb8">(</span><span style="left:556px;color:#c3e88d">"v"</span><span style="left:583px;color:#89ddff">,</span><span style="left:601px;color:#c3e88d">"&lt;A-j&gt;"</span><span style="left:664px;color:#89ddff">,</span><span style="left:682px;color:#c3e88d">":m</span><span style="left:718px;color:#c3e88d">'&gt;+1&lt;cr&gt;gv=gv"</span><span style="left:844px;color:#89ddff">,</span><span style="left:862px;color:#c099ff">{</span><span style="left:880px;color:#23323f">des</span><span style="left:907px;color:#c8d3f5">vim</span><span style="left:934px;color:#89ddff">.</span><span style="left:943px;color:#4fd6be">keymap</span><span style="left:997px;color:#89ddff">.</span><span style="left:1006px;color:#4fd6be">set</span><span style="left:1033px;color:#828bb8">(</span><span style="left:1042px;color:#c3e88d">'i'</span><span style="left:1069px;color:#89ddff">,</span><span style="left:1087px;color:#c3e88d">'&lt;Tab&gt;'</span><span style="left:1150px;color:#89ddff">,</span><span style="left:1168px;color:#c099ff">function</span><span style="left:1240px;color:#828bb8">()</span></div>
<div class="row" style="top:523px"><span style="left:376px;color:#3b4261">17</span><span style="left:421px;color:#c8d3f5">vim</span><span style="left:448px;color:#89ddff">.</span><span style="left:457px;color:#4fd6be">keymap</span><span style="left:511px;color:#89ddff">.</span><span style="left:520px;color:#82aaff">set</span><span style="left:547px;color:#828bb8">(</span><span style="left:556px;color:#c3e88d">"i"</span><span style="left:583px;color:#89ddff">,</span><span style="left:601px;color:#c3e88d">"&lt;A-j&gt;"</span><span style="left:664px;color:#89ddff">,</span><span style="left:682px;color:#c3e88d">"&lt;Esc&gt;:m</span><span style="left:763px;color:#c3e88d">.+1&lt;cr&gt;==gi"</span><span style="left:889px;color:#2e2c46">{</span><span style="left:907px;color:#23323f">de</span><span style="left:979px;color:#2e343a">M</span><span class="i " style="left:925px;color:#fca7ea">return</span><span style="left:988px;color:#c8d3f5">vim</span><span style="left:1015px;color:#89ddff">.</span><span style="left:1024px;color:#4fd6be">fn</span><span style="left:1042px;color:#89ddff">.</span><span style="left:1051px;color:#4fd6be">pumvisible</span><span style="left:1141px;color:#828bb8">()</span><span style="left:1168px;color:#89ddff">==</span><span style="left:1195px;color:#ff966c">1</span><span style="left:1213px;color:#89ddff">and</span><span style="left:1249px;color:#c3e88d">"&lt;C-n&gt;"</span><span style="left:1321px;color:#89ddff">or</span><span style="left:1348px;color:#c3e88d">"&lt;Tab&gt;"</span></div>
<div class="row" style="top:543px"><span style="left:376px;color:#3b4261">18</span><span style="left:421px;color:#c8d3f5">vim</span><span style="left:448px;color:#89ddff">.</span><span style="left:457px;color:#4fd6be">keymap</span><span style="left:511px;color:#89ddff">.</span><span style="left:520px;color:#82aaff">set</span><span style="left:547px;color:#828bb8">(</span><span style="left:556px;color:#c3e88d">"n"</span><span style="left:583px;color:#89ddff">,</span><span style="left:601px;color:#c3e88d">"&lt;A-k&gt;"</span><span style="left:664px;color:#89ddff">,</span><span style="left:682px;color:#c3e88d">":m</span><span style="left:718px;color:#c3e88d">.-2&lt;cr&gt;=="</span><span style="left:808px;color:#89ddff">,</span><span style="left:826px;color:#c099ff">{</span><span style="left:844px;color:#4fd6be">des</span><span style="left:889px;color:#293346">=</span><span style="left:943px;color:#2e343a">e</span><span style="left:961px;color:#2e343a">u</span><span style="left:1006px;color:#282b3e">)</span><span style="left:907px;color:#c099ff">end</span><span style="left:934px;color:#89ddff">,</span><span style="left:952px;color:#c099ff">{</span><span style="left:970px;color:#4fd6be">expr</span><span style="left:1015px;color:#89ddff">=</span><span style="left:1033px;color:#ff966c">true</span><span style="left:1078px;color:#c099ff">}</span><span style="left:1087px;color:#828bb8">)</span></div>
<div class="row" style="top:563px"><span style="left:376px;color:#3b4261">19</span><span style="left:421px;color:#c8d3f5">vim</span><span style="left:448px;color:#89ddff">.</span><span style="left:457px;color:#4fd6be">keymap</span><span style="left:511px;color:#89ddff">.</span><span style="left:520px;color:#82aaff">set</span><span style="left:547px;color:#828bb8">(</span><span style="left:556px;color:#c3e88d">"v"</span><span style="left:583px;color:#89ddff">,</span><span style="left:601px;color:#c3e88d">"&lt;A-k&gt;"</span><span style="left:664px;color:#89ddff">,</span><span style="left:682px;color:#c3e88d">":m</span><span style="left:718px;color:#c3e88d">'&lt;-2&lt;cr&gt;gv=gv"</span><span style="left:844px;color:#89ddff">,</span><span style="left:862px;color:#c099ff">{</span><span style="left:880px;color:#23323f">des</span><span style="left:925px;color:#293346">=</span><span class="i " style="left:907px;color:#636da6">--</span><span class="i " style="left:934px;color:#636da6">&lt;Plug&gt;</span><span class="i " style="left:997px;color:#636da6">mappings</span></div>
<div class="row" style="top:583px"><span style="left:376px;color:#3b4261">20</span><span style="left:421px;color:#c8d3f5">vim</span><span style="left:448px;color:#89ddff">.</span><span style="left:457px;color:#4fd6be">keymap</span><span style="left:511px;color:#89ddff">.</span><span style="left:520px;color:#82aaff">set</span><span style="left:547px;color:#828bb8">(</span><span style="left:556px;color:#c3e88d">"i"</span><span style="left:583px;color:#89ddff">,</span><span style="left:601px;color:#c3e88d">"&lt;A-k&gt;"</span><span style="left:664px;color:#89ddff">,</span><span style="left:682px;color:#c3e88d">"&lt;Esc&gt;:m</span><span style="left:763px;color:#c3e88d">.-2&lt;cr&gt;==gi"</span><span style="left:889px;color:#2e2c46">{</span><span style="left:907px;color:#c8d3f5">vim</span><span style="left:934px;color:#89ddff">.</span><span style="left:943px;color:#4fd6be">keymap</span><span style="left:997px;color:#89ddff">.</span><span style="left:1006px;color:#4fd6be">set</span><span style="left:1033px;color:#828bb8">(</span><span style="left:1042px;color:#c3e88d">'n'</span><span style="left:1069px;color:#89ddff">,</span><span style="left:1087px;color:#c3e88d">'[%%'</span><span style="left:1132px;color:#89ddff">,</span><span style="left:1150px;color:#c3e88d">'&lt;Plug&gt;(MatchitNormalMultiBackward)'</span><span style="left:1474px;color:#828bb8">)</span></div>
<div class="row" style="top:603px"><span style="left:376px;color:#3b4261">21</span></div>
<div class="row" style="top:623px"><span style="left:376px;color:#3b4261">22</span><span class="i " style="left:421px;color:#636da6">--</span><span class="i " style="left:448px;color:#636da6">buffers</span><span style="left:889px;color:#c8d3f5">Note</span><span style="left:934px;color:#c8d3f5">that</span><span style="left:979px;color:#c8d3f5">in</span><span style="left:1006px;color:#c8d3f5">a</span><span style="left:1024px;color:#c8d3f5">mapping</span><span style="left:1096px;color:#c8d3f5">like:</span></div>
<div class="row" style="top:643px"><span style="left:376px;color:#3b4261">23</span><span style="left:421px;color:#c099ff">if</span><span style="left:448px;color:#c099ff">not</span><span style="left:484px;color:#c8d3f5">Util</span><span style="left:520px;color:#89ddff">.</span><span style="left:529px;color:#82aaff">has</span><span style="left:556px;color:#828bb8">(</span><span style="left:565px;color:#c3e88d">"nvim-bufferline.lua"</span><span style="left:754px;color:#828bb8">)</span><span style="left:772px;color:#c099ff">then</span></div>
<div class="row" style="top:663px"><span style="left:376px;color:#3b4261">24</span><span style="left:439px;color:#c8d3f5">vim</span><span style="left:466px;color:#89ddff">.</span><span style="left:475px;color:#4fd6be">keymap</span><span style="left:529px;color:#89ddff">.</span><span style="left:538px;color:#82aaff">set</span><span style="left:565px;color:#828bb8">(</span><span style="left:574px;color:#c3e88d">"n"</span><span style="left:601px;color:#89ddff">,</span><span style="left:619px;color:#c3e88d">"&lt;S-h&gt;"</span><span style="left:682px;color:#89ddff">,</span><span style="left:700px;color:#c3e88d">"&lt;cmd&gt;bprevious&lt;cr&gt;</span><span style="left:880px;color:#293346">,</span><span style="left:898px;color:#2e2c46">{</span><span style="left:1087px;color:#2e343a">"</span><span style="left:916px;color:#c8d3f5">vim</span><span style="left:943px;color:#89ddff">.</span><span style="left:952px;color:#4fd6be">keymap</span><span style="left:1006px;color:#89ddff">.</span><span style="left:1015px;color:#4fd6be">set</span><span style="left:1042px;color:#828bb8">(</span><span style="left:1051px;color:#c3e88d">'n'</span><span style="left:1078px;color:#89ddff">,</span><span style="left:1096px;color:#c3e88d">'asdf'</span><span style="left:1150px;color:#89ddff">,</span><span style="left:1168px;color:#82aaff">require</span><span style="left:1231px;color:#828bb8">(</span><span style="left:1240px;color:#c3e88d">'jkl'</span><span style="left:1285px;color:#828bb8">)</span><span style="left:1294px;color:#89ddff">.</span><span style="left:1303px;color:#4fd6be">my_fun</span><span style="left:1357px;color:#828bb8">)</span></div>
<div class="row" style="top:683px"><span style="left:376px;color:#3b4261">25</span><span style="left:439px;color:#c8d3f5">vim</span><span style="left:466px;color:#89ddff">.</span><span style="left:475px;color:#4fd6be">keymap</span><span style="left:529px;color:#89ddff">.</span><span style="left:538px;color:#82aaff">set</span><span style="left:565px;color:#828bb8">(</span><span style="left:574px;color:#c3e88d">"n"</span><span style="left:601px;color:#89ddff">,</span><span style="left:619px;color:#c3e88d">"&lt;S-l&gt;"</span><span style="left:682px;color:#89ddff">,</span><span style="left:700px;color:#c3e88d">"&lt;cmd&gt;bnext&lt;cr&gt;"</span><span style="left:844px;color:#89ddff">,</span><span style="left:862px;color:#c099ff">{</span><span style="left:880px;color:#23323f">desc</span><span style="left:925px;color:#293346">=</span><span style="left:943px;color:#2e343a">"Next</span><span style="left:997px;color:#2e343a">buffer"</span><span style="left:1069px;color:#2e2c46">}</span><span style="left:1078px;color:#282b3e">)</span></div>
<div class="row" style="top:703px"><span style="left:376px;color:#3b4261">26</span><span style="left:439px;color:#c8d3f5">vim</span><span style="left:466px;color:#89ddff">.</span><span style="left:475px;color:#4fd6be">keymap</span><span style="left:529px;color:#89ddff">.</span><span style="left:538px;color:#82aaff">set</span><span style="left:565px;color:#828bb8">(</span><span style="left:574px;color:#c3e88d">"n"</span><span style="left:601px;color:#89ddff">,</span><span style="left:619px;color:#c3e88d">"&lt;leader&gt;b["</span><span style="left:727px;color:#89ddff">,</span><span style="left:745px;color:#c3e88d">"&lt;cmd&gt;bpreviou</span><span style="left:880px;color:#2e343a">&lt;</span><span style="left:916px;color:#2e343a">"</span><span style="left:1051px;color:#2e343a">e</span><span style="left:1096px;color:#2e343a">f</span><span style="left:889px;color:#c8d3f5">the</span><span style="left:925px;color:#c8d3f5">require('jkl')</span><span style="left:1060px;color:#c8d3f5">gets</span><span style="left:1105px;color:#c8d3f5">evaluated</span><span style="left:1195px;color:#c8d3f5">during</span><span style="left:1258px;color:#c8d3f5">this</span><span style="left:1303px;color:#c8d3f5">call</span><span style="left:1348px;color:#c8d3f5">in</span><span style="left:1375px;color:#c8d3f5">order</span><span style="left:1429px;color:#c8d3f5">to</span><span style="left:1456px;color:#c8d3f5">access</span><span style="left:1519px;color:#c8d3f5">the</span><span style="left:1555px;color:#c8d3f5">function.</span></div>
<div class="row" style="top:723px"><span style="left:376px;color:#3b4261">27</span><span style="left:439px;color:#c8d3f5">vim</span><span style="left:466px;color:#89ddff">.</span><span style="left:475px;color:#4fd6be">keymap</span><span style="left:529px;color:#89ddff">.</span><span style="left:538px;color:#82aaff">set</span><span style="left:565px;color:#828bb8">(</span><span style="left:574px;color:#c3e88d">"n"</span><span style="left:601px;color:#89ddff">,</span><span style="left:619px;color:#c3e88d">"&lt;leader&gt;b]"</span><span style="left:727px;color:#89ddff">,</span><span style="left:745px;color:#c3e88d">"&lt;cmd&gt;bnext&lt;cr</span><span style="left:880px;color:#2e343a">"</span><span style="left:907px;color:#2e2c46">{</span><span style="left:943px;color:#23323f">s</span><span style="left:988px;color:#2e343a">"</span><span style="left:1015px;color:#2e343a">x</span><span style="left:1069px;color:#2e343a">f</span><span style="left:1114px;color:#2e2c46">}</span><span style="left:889px;color:#c8d3f5">If</span><span style="left:916px;color:#c8d3f5">you</span><span style="left:952px;color:#c8d3f5">want</span><span style="left:997px;color:#c8d3f5">to</span><span style="left:1024px;color:#c8d3f5">avoid</span><span style="left:1078px;color:#c8d3f5">this</span><span style="left:1123px;color:#c8d3f5">cost</span><span style="left:1168px;color:#c8d3f5">at</span><span style="left:1195px;color:#c8d3f5">startup</span><span style="left:1267px;color:#c8d3f5">you</span><span style="left:1303px;color:#c8d3f5">can</span><span style="left:1339px;color:#c8d3f5">wrap</span><span style="left:1384px;color:#c8d3f5">it</span><span style="left:1411px;color:#c8d3f5">in</span><span style="left:1438px;color:#c8d3f5">a</span><span style="left:1456px;color:#c8d3f5">function,</span><span style="left:1546px;color:#c8d3f5">for</span><span style="left:1582px;color:#c8d3f5">example:</span></div>
<div class="row" style="top:743px"><span style="left:376px;color:#3b4261">28</span><span style="left:421px;color:#c099ff">end</span></div>
<div class="row" style="top:763px"><span style="left:376px;color:#3b4261">29</span><span style="left:421px;color:#c8d3f5">vim</span><span style="left:448px;color:#89ddff">.</span><span style="left:457px;color:#4fd6be">keymap</span><span style="left:511px;color:#89ddff">.</span><span style="left:520px;color:#82aaff">set</span><span style="left:547px;color:#828bb8">(</span><span style="left:556px;color:#c3e88d">"n"</span><span style="left:583px;color:#89ddff">,</span><span style="left:601px;color:#c3e88d">"&lt;leader&gt;bb"</span><span style="left:709px;color:#89ddff">,</span><span style="left:727px;color:#c3e88d">"&lt;cmd&gt;e</span><span style="left:799px;color:#c3e88d">#&lt;cr&gt;"</span><span style="left:853px;color:#89ddff">,</span><span style="left:871px;color:#c099ff">{</span><span style="left:889px;color:#4fd6be">desc</span><span style="left:934px;color:#89ddff">=</span><span style="left:952px;color:#c3e88d">"Switch</span><span style="left:1024px;color:#c3e88d">to</span><span style="left:1051px;color:#c3e88d">Other</span><span style="left:1105px;color:#c3e88d">Buffer"</span><span style="left:1177px;color:#c099ff">}</span><span style="left:1186px;color:#828bb8">)</span></div>
<div class="row" style="top:783px"><span style="left:376px;color:#3b4261">30</span><span style="left:421px;color:#c8d3f5">vim</span><span style="left:448px;color:#89ddff">.</span><span style="left:457px;color:#4fd6be">keymap</span><span style="left:511px;color:#89ddff">.</span><span style="left:520px;color:#82aaff">set</span><span style="left:547px;color:#828bb8">(</span><span style="left:556px;color:#c3e88d">"n"</span><span style="left:583px;color:#89ddff">,</span><span style="left:601px;color:#c3e88d">"&lt;leader&gt;`"</span><span style="left:700px;color:#89ddff">,</span><span style="left:718px;color:#c3e88d">"&lt;cmd&gt;e</span><span style="left:790px;color:#c3e88d">#&lt;cr&gt;"</span><span style="left:844px;color:#89ddff">,</span><span style="left:862px;color:#c099ff">{</span><span style="left:880px;color:#4fd6be">desc</span><span style="left:925px;color:#89ddff">=</span><span style="left:943px;color:#c3e88d">"Switch</span><span style="left:1015px;color:#c3e88d">to</span><span style="left:1042px;color:#c3e88d">Other</span><span style="left:1096px;color:#c3e88d">Buffer"</span><span style="left:1168px;color:#c099ff">}</span><span style="left:1177px;color:#828bb8">)</span></div>
<div class="row" style="top:803px"><span style="left:376px;color:#3b4261">31</span></div>
<div class="row" style="top:823px"><span style="left:376px;color:#3b4261">32</span><span class="i " style="left:421px;color:#636da6">--</span><span class="i " style="left:448px;color:#636da6">Clear</span><span class="i " style="left:502px;color:#636da6">search</span><span class="i " style="left:565px;color:#636da6">with</span><span class="i " style="left:610px;color:#636da6">&lt;esc&gt;</span></div>
<div class="row" style="top:843px"><span style="left:376px;color:#3b4261">33</span><span style="left:421px;color:#c8d3f5">vim</span><span style="left:448px;color:#89ddff">.</span><span style="left:457px;color:#4fd6be">keymap</span><span style="left:511px;color:#89ddff">.</span><span style="left:520px;color:#82aaff">set</span><span style="left:547px;color:#828bb8">(</span><span style="left:556px;color:#c099ff">{</span><span style="left:574px;color:#c3e88d">"i"</span><span style="left:601px;color:#89ddff">,</span><span style="left:619px;color:#c3e88d">"n"</span><span style="left:655px;color:#c099ff">}</span><span style="left:664px;color:#89ddff">,</span><span style="left:682px;color:#c3e88d">"&lt;esc&gt;"</span><span style="left:745px;color:#89ddff">,</span><span style="left:763px;color:#c3e88d">"&lt;cmd&gt;noh&lt;cr&gt;&lt;esc&gt;"</span><span style="left:934px;color:#89ddff">,</span><span style="left:952px;color:#c099ff">{</span><span style="left:970px;color:#4fd6be">desc</span><span style="left:1015px;color:#89ddff">=</span><span style="left:1033px;color:#c3e88d">"Escape</span><span style="left:1105px;color:#c3e88d">and</span><span style="left:1141px;color:#c3e88d">clear</span><span style="left:1195px;color:#c3e88d">hlsearch"</span><span style="left:1285px;color:#c099ff">}</span><span style="left:1294px;color:#828bb8">)</span></div>
<div class="row" style="top:863px"><span style="left:376px;color:#3b4261">34</span></div>
<div class="row" style="top:883px"><span style="left:376px;color:#3b4261">35</span><span class="i " style="left:421px;color:#636da6">--</span><span class="i " style="left:448px;color:#636da6">Clear</span><span class="i " style="left:502px;color:#636da6">search,</span><span class="i " style="left:574px;color:#636da6">diff</span><span class="i " style="left:619px;color:#636da6">update</span><span class="i " style="left:682px;color:#636da6">and</span><span class="i " style="left:718px;color:#636da6">redraw</span></div>
<div class="row" style="top:903px"><span style="left:376px;color:#3b4261">36</span><span class="i " style="left:421px;color:#636da6">--</span><span class="i " style="left:448px;color:#636da6">taken</span><span class="i " style="left:502px;color:#636da6">from</span><span class="i " style="left:547px;color:#636da6">runtime/lua/_editor.lua</span></div>
<div class="row" style="top:923px"><span style="left:376px;color:#3b4261">37</span><span style="left:421px;color:#c8d3f5">vim</span><span style="left:448px;color:#89ddff">.</span><span style="left:457px;color:#4fd6be">keymap</span><span style="left:511px;color:#89ddff">.</span><span style="left:520px;color:#82aaff">set</span><span style="left:547px;color:#828bb8">(</span></div>
<div class="row" style="top:943px"><span style="left:376px;color:#3b4261">38</span><span style="left:439px;color:#c3e88d">"n"</span><span style="left:466px;color:#89ddff">,</span></div>
<div class="row" style="top:963px"><span style="left:376px;color:#3b4261">39</span><span style="left:439px;color:#c3e88d">"&lt;leader&gt;ur"</span><span style="left:547px;color:#89ddff">,</span></div>
<div class="row" style="top:983px"><span style="left:376px;color:#3b4261">40</span><span style="left:439px;color:#c3e88d">"&lt;Cmd&gt;nohlsearch&lt;Bar&gt;diffupdate&lt;Bar&gt;normal!</span><span style="left:835px;color:#c3e88d">&lt;C-L&gt;&lt;CR&gt;"</span><span style="left:925px;color:#89ddff">,</span></div>
<div class="row" style="top:1003px"><span style="left:376px;color:#3b4261">41</span><span style="left:439px;color:#c099ff">{</span><span style="left:457px;color:#4fd6be">desc</span><span style="left:502px;color:#89ddff">=</span><span style="left:520px;color:#c3e88d">"Redraw</span><span style="left:592px;color:#c3e88d">/</span><span style="left:610px;color:#c3e88d">clear</span><span style="left:664px;color:#c3e88d">hlsearch</span><span style="left:745px;color:#c3e88d">/</span><span style="left:763px;color:#c3e88d">diff</span><span style="left:808px;color:#c3e88d">update"</span><span style="left:880px;color:#c099ff">}</span></div>
<div class="row" style="top:1023px"><span style="left:376px;color:#3b4261">42</span><span style="left:421px;color:#828bb8">)</span></div>
<div class="row" style="top:1043px"><span style="left:376px;color:#3b4261">43</span></div>
<div class="row" style="top:1063px"><span style="left:376px;color:#3b4261">44</span><span style="left:421px;color:#c8d3f5">vim</span><span style="left:448px;color:#89ddff">.</span><span style="left:457px;color:#4fd6be">keymap</span><span style="left:511px;color:#89ddff">.</span><span style="left:520px;color:#82aaff">set</span><span style="left:547px;color:#828bb8">(</span><span style="left:556px;color:#c3e88d">"n"</span><span style="left:583px;color:#89ddff">,</span><span style="left:601px;color:#c3e88d">"gw"</span><span style="left:637px;color:#89ddff">,</span><span style="left:655px;color:#c3e88d">"*N"</span><span style="left:691px;color:#828bb8">)</span></div>
<div class="row" style="top:1083px"><span style="left:376px;color:#3b4261">45</span><span style="left:421px;color:#c8d3f5">vim</span><span style="left:448px;color:#89ddff">.</span><span style="left:457px;color:#4fd6be">keymap</span><span style="left:511px;color:#89ddff">.</span><span style="left:520px;color:#82aaff">set</span><span style="left:547px;color:#828bb8">(</span><span style="left:556px;color:#c3e88d">"x"</span><span style="left:583px;color:#89ddff">,</span><span style="left:601px;color:#c3e88d">"gw"</span><span style="left:637px;color:#89ddff">,</span><span style="left:655px;color:#c3e88d">"*N"</span><span style="left:691px;color:#828bb8">)</span></div>
<div class="row" style="top:1103px"><span style="left:7px;color:#1b1d2b">INSERT</span><span style="left:106px;color:#c3e88d">main</span><span style="left:187px;color:#828bb8">lua/lazyvim/config/keymaps.lua</span><span style="left:1483px;color:#c099ff">A</span><span style="left:1537px;color:#65bcff">3</span><span style="left:1645px;color:#c3e88d">7%</span><span style="left:1681px;color:#c3e88d">9:13</span><span style="left:1762px;color:#1b1d2b">13:49</span></div>
</body></html>
